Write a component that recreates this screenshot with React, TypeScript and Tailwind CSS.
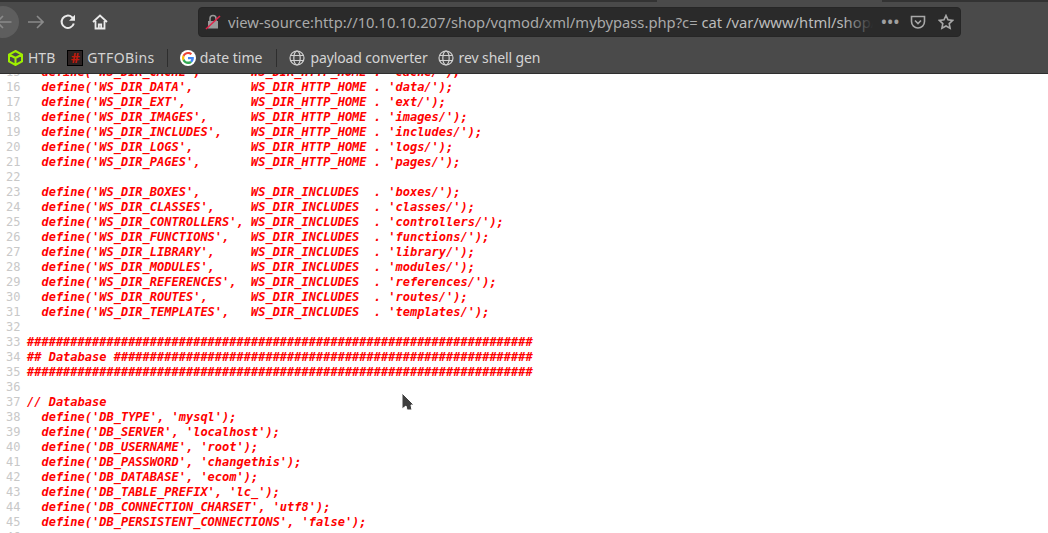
import React from 'react';

const globe = (
  <svg className="w-4 h-4 shrink-0" viewBox="0 0 16 16" fill="none" stroke="#d0d0d0" strokeWidth={1.2}>
    <circle cx="8" cy="8" r="7" />
    <ellipse cx="8" cy="8" rx="3.2" ry="7" />
    <path d="M1.500 5.500h13M1.500 10.500h13" />
  </svg>
);

const def = (name: string, base: string, file: string) =>
  `  define('${name}',`.padEnd(31, ' ') + `${base} . '${file}');`;

const lines: [number, string][] = [
  [15, def('WS_DIR_CACHE', 'WS_DIR_HTTP_HOME', 'cache/')],
  [16, def('WS_DIR_DATA', 'WS_DIR_HTTP_HOME', 'data/')],
  [17, def('WS_DIR_EXT', 'WS_DIR_HTTP_HOME', 'ext/')],
  [18, def('WS_DIR_IMAGES', 'WS_DIR_HTTP_HOME', 'images/')],
  [19, def('WS_DIR_INCLUDES', 'WS_DIR_HTTP_HOME', 'includes/')],
  [20, def('WS_DIR_LOGS', 'WS_DIR_HTTP_HOME', 'logs/')],
  [21, def('WS_DIR_PAGES', 'WS_DIR_HTTP_HOME', 'pages/')],
  [22, ""],
  [23, def('WS_DIR_BOXES', 'WS_DIR_INCLUDES ', 'boxes/')],
  [24, def('WS_DIR_CLASSES', 'WS_DIR_INCLUDES ', 'classes/')],
  [25, "  define('WS_DIR_CONTROLLERS', WS_DIR_INCLUDES  . 'controllers/');"],
  [26, def('WS_DIR_FUNCTIONS', 'WS_DIR_INCLUDES ', 'functions/')],
  [27, def('WS_DIR_LIBRARY', 'WS_DIR_INCLUDES ', 'library/')],
  [28, def('WS_DIR_MODULES', 'WS_DIR_INCLUDES ', 'modules/')],
  [29, def('WS_DIR_REFERENCES', 'WS_DIR_INCLUDES ', 'references/')],
  [30, def('WS_DIR_ROUTES', 'WS_DIR_INCLUDES ', 'routes/')],
  [31, def('WS_DIR_TEMPLATES', 'WS_DIR_INCLUDES ', 'templates/')],
  [32, ""],
  [33, '#'.repeat(70)],
  [34, '## Database ' + '#'.repeat(58)],
  [35, '#'.repeat(70)],
  [36, ""],
  [37, "// Database"],
  [38, "  define('DB_TYPE', 'mysql');"],
  [39, "  define('DB_SERVER', 'localhost');"],
  [40, "  define('DB_USERNAME', 'root');"],
  [41, "  define('DB_PASSWORD', 'changethis');"],
  [42, "  define('DB_DATABASE', 'ecom');"],
  [43, "  define('DB_TABLE_PREFIX', 'lc_');"],
  [44, "  define('DB_CONNECTION_CHARSET', 'utf8');"],
  [45, "  define('DB_PERSISTENT_CONNECTIONS', 'false');"],
  [46, ""],
];

export default function App() {
  return (
    <div className="relative h-[533px] w-[1048px] overflow-hidden bg-white flex flex-col font-['Noto_Sans',sans-serif]">
      <div className="h-[74px] shrink-0 bg-[#4a4a4a] border-b border-[#2e2e2e] flex flex-col">
        <div className="h-[2px] flex shrink-0">
          <div className="w-[657px] bg-[#333333]" />
          <div className="flex-1" />
          <div className="w-[166px] bg-[#333333]" />
        </div>
        <div className="h-[40px] flex items-center relative">
          <div className="w-[32px] h-[32px] -ml-[13px] rounded-full bg-[#5e5e5e] flex items-center justify-end pr-[7px] shrink-0">
            <svg className="w-4 h-4" viewBox="0 0 16 16" fill="none" stroke="#8a8a8a" strokeWidth={1.6}><path d="M15.500 8H1M7 2 1 8l6 6" /></svg>
          </div>
          <svg className="w-4 h-4 ml-[9px] shrink-0" viewBox="0 0 16 16" fill="none" stroke="#8a8a8a" strokeWidth={1.6}><path d="M0 8h15M9 2l6 6-6 6" /></svg>
          <svg className="w-4 h-4 ml-[16px] shrink-0" viewBox="0 0 16 16" fill="none" stroke="#eaeaea" strokeWidth={2}><path d="M13.800 9.500A6.200 6.200 0 1 1 12 3.200L14 5.200" /><path d="M15 .8v6H9z" fill="#eaeaea" stroke="none" /></svg>
          <svg className="w-4 h-4 ml-[16px] shrink-0" viewBox="0 0 16 16" fill="none" stroke="#eaeaea" strokeWidth={1.8}><path d="M1 8l7-6.500L15 8M3.500 7v7.500h9V7" /><path d="M6.800 14.500v-4h2.400v4" /></svg>
          <div className="ml-[90px] w-[763px] h-[30px] rounded-[4px] bg-[#2a2a2a] border border-[#262626] flex items-center relative shrink-0">
            <svg className="w-[16px] h-[16px] ml-[6px] shrink-0" viewBox="0 0 16 16" fill="none">
              <path d="M3 7h10v7.500H3z" fill="#9a9a9a" />
              <path d="M5 7V4.500a3 3 0 0 1 6 0V7" stroke="#9a9a9a" strokeWidth={1.5} />
              <path d="M1 15 15 2" stroke="#e0244a" strokeWidth={1.6} />
            </svg>
            <span className="relative ml-[7px] text-[14.75px] text-[#a9a9a9] whitespace-nowrap overflow-hidden w-[645px]">
              view-source:http://10.10.10.207/shop/vqmod/xml/mybypass.php?c= <span className="text-[#bcbcbc]">cat /var/www/html/shop/var/www/html/shop</span>
              <span className="absolute right-0 top-0 bottom-0 w-[30px] bg-gradient-to-r from-transparent to-[#2a2a2a]" />
            </span>
            <div className="absolute right-0 top-0 h-full flex items-center pr-[6px]">
              <span className="text-[#a0a0a0] text-[14px] font-bold tracking-[1px] mr-[10px] leading-none">•••</span>
              <svg className="w-4 h-4 mr-[12px]" viewBox="0 0 16 16" fill="none" stroke="#a8a8a8" strokeWidth={1.6}><path d="M1.500 2.500h13v5a6.500 6.500 0 0 1-13 0z" /><path d="M5 6.500 8 9.500l3-3" /></svg>
              <svg className="w-4 h-4" viewBox="0 0 16 16" fill="none" stroke="#a8a8a8" strokeWidth={1.6}><path d="M8 1.500l2 4.300 4.700.6-3.500 3.200.9 4.700L8 12l-4.100 2.300.9-4.700L1.300 6.400 6 5.800z" /></svg>
            </div>
          </div>
        </div>
        <div className="h-[31px] flex items-center text-[14px] text-[#d4d4d4] pl-[8px] whitespace-nowrap">
          <svg className="w-[15px] h-[16px] shrink-0" viewBox="0 0 15 16" fill="none" stroke="#9fef00" strokeWidth={2}><path d="M7.500 1 14 4.500v7L7.500 15 1 11.500v-7zM1 4.500l6.500 3.500L14 4.500M7.500 8v7" /></svg>
          <span className="ml-[5px]">HTB</span>
          <div className="ml-[12px] w-[16px] h-[16px] shrink-0 border border-black bg-[#2b2222] flex items-center justify-center text-[#c01a0c] text-[14px] font-bold leading-none">#</div>
          <span className="ml-[4px] tracking-[0.4px]">GTFOBins</span>
          <div className="w-px h-[18px] bg-[#2e2e2e] ml-[12px] mr-[12px] shrink-0" />
          <svg className="w-4 h-4 shrink-0" viewBox="0 0 48 48">
            <circle cx="24" cy="24" r="24" fill="#fff" />
            <path fill="#EA4335" d="M24 12c3 0 5.600 1 7.600 3l4.600-4.600C33 7.500 28.900 6 24 6 17 6 11 10 8 15.800l5.400 4.200C14.800 15.400 19 12 24 12z" />
            <path fill="#4285F4" d="M41.600 24.500c0-1.300-.1-2.400-.3-3.500H24v6.800h9.900c-.4 2.200-1.700 4.100-3.600 5.400l5.300 4.100c3.200-2.900 6-7.300 6-12.800z" />
            <path fill="#FBBC05" d="M13.400 28c-.4-1.300-.6-2.600-.6-4s.2-2.700.6-4L8 15.800C6.700 18.200 6 21 6 24s.7 5.800 2 8.200z" />
            <path fill="#34A853" d="M24 42c4.900 0 9-1.600 11.600-4.700l-5.300-4.100c-1.500 1-3.500 1.600-6.300 1.600-5 0-9.200-3.400-10.600-7.900L8 32.200C11 38 17 42 24 42z" />
          </svg>
          <span className="ml-[4px]">date time</span>
          <div className="w-px h-[18px] bg-[#2e2e2e] ml-[14px] mr-[12px] shrink-0" />
          {globe}
          <span className="ml-[5px] tracking-[-0.12px]">payload converter</span>
          <span className="w-[10px] shrink-0" />
          {globe}
          <span className="ml-[5px] tracking-[-0.1px]">rev shell gen</span>
        </div>
      </div>
      <div className="flex-1 overflow-hidden">
        <div className="-mt-[9px] font-['DejaVu_Sans_Mono',monospace] text-[12px] leading-[15px]">
          {lines.map(([n, text]) => (
            <div key={n} className="flex h-[15px] whitespace-pre">
              <span className="w-[27px] pl-[6px] shrink-0 text-[#c8c8c8]">{n}</span>
              <span className="text-[#ff0000] font-bold italic">{text}</span>
            </div>
          ))}
        </div>
      </div>
      <svg className="absolute left-[400px] top-[392px] w-[16px] h-[22px]" viewBox="0 0 16 22">
        <path d="M2 1v16l4-3 1 4h5l-1-5h3z" fill="#3f3f3f" stroke="#fff" strokeWidth={1} />
      </svg>
    </div>
  );
}
